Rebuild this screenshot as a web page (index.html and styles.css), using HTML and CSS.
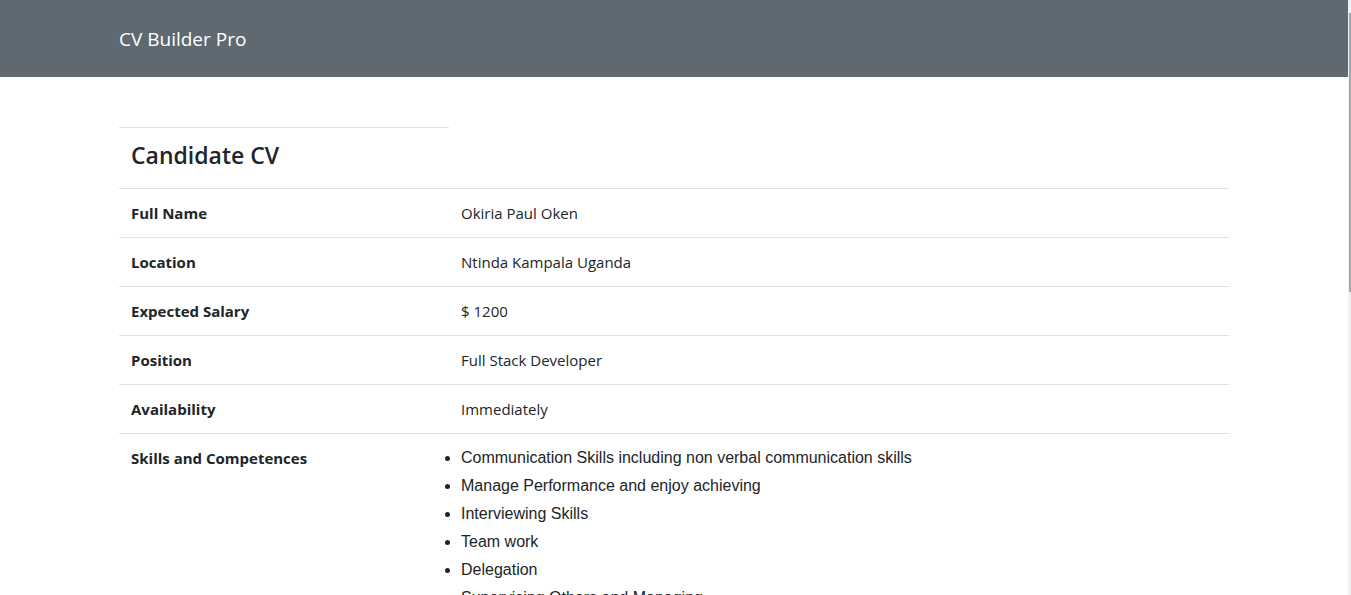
FILE: index.html
```html
<!DOCTYPE html>
<html lang="en">
<head>
<meta charset="utf-8">
<title>CV Builder Pro</title>
<link rel="stylesheet" href="styles.css">
</head>
<body>
<div class="page">
  <nav class="navbar">
    <div class="container">
      <a class="brand" href="#">CV Builder Pro</a>
    </div>
  </nav>
  <main class="container main">
    <table class="cv-table">
      <thead>
        <tr><th class="title-cell"><h4>Candidate CV</h4></th><th class="empty-head"></th></tr>
      </thead>
      <tbody>
        <tr><th>Full Name</th><td>Okiria Paul Oken</td></tr>
        <tr><th>Location</th><td>Ntinda Kampala Uganda</td></tr>
        <tr><th>Expected Salary</th><td>$ 1200</td></tr>
        <tr><th>Position</th><td>Full Stack Developer</td></tr>
        <tr><th>Availability</th><td>Immediately</td></tr>
        <tr><th>Skills and Competences</th><td>
          <ul class="skills">
            <li>Communication Skills including non verbal communication skills</li>
            <li>Manage Performance and enjoy achieving</li>
            <li>Interviewing Skills</li>
            <li>Team work</li>
            <li>Delegation</li>
            <li>Supervising Others and Managing</li>
            <li>Problem Solving</li>
            <li>Time Management</li>
          </ul>
        </td></tr>
        <tr><th>Education</th><td>Bachelor of Science in Computer Science</td></tr>
        <tr><th>Languages</th><td>English, Luganda</td></tr>
        <tr><th>Experience</th><td>5 Years</td></tr>
        <tr><th>Email</th><td>okiria.paul@example.com</td></tr>
        <tr><th>Phone</th><td>+256 700 000 000</td></tr>
        <tr><th>References</th><td>Available on request</td></tr>
      </tbody>
    </table>
  </main>
</div>
<div class="scrollbar"><div class="scrollbar-thumb"></div></div>
</body>
</html>
```
FILE: styles.css
```css
html { overflow: hidden; }
body {
  margin: 0;
  font-family: "Open Sans", "Noto Sans", sans-serif;
  font-size: 16px;
  line-height: 1.5;
  color: #212529;
  background: #fff;
}
.page { width: calc(100% - 3px); }
.container {
  max-width: 1140px;
  margin: 0 auto;
  padding: 0 15px;
  box-sizing: border-box;
}
.navbar {
  background: #5f6972;
  height: 77px;
  display: flex;
  align-items: center;
}
.navbar .container { width: 100%; }
.brand {
  display: block;
  color: #fff;
  text-decoration: none;
  font-size: 19px;
  line-height: 26px;
}
.main { padding-top: 50px; padding-bottom: 60px; }
.cv-table {
  width: 100%;
  border-collapse: collapse;
}
.cv-table th, .cv-table td {
  padding: 12px;
  text-align: left;
  vertical-align: top;
  border-top: 1px solid #dee2e6;
  font-size: 15px;
  line-height: 24px;
}
.cv-table th { width: 306px; font-weight: 700; }
.cv-table td { font-weight: 400; }
.cv-table thead th.empty-head { border-top: none; width: auto; }
.title-cell h4 {
  margin: 0;
  font-size: 23px;
  font-weight: 600;
  line-height: 28.8px;
  padding-top: 1px;
  padding-bottom: 6px;
}
.skills {
  margin: 0;
  padding: 0;
  font-family: "Liberation Sans", Arial, sans-serif;
  font-size: 16px;
}
.skills li { margin-bottom: 4px; }
.scrollbar {
  position: fixed;
  top: 0;
  right: 0;
  bottom: 0;
  width: 3px;
  background: #f1f1f1;
}
.scrollbar-thumb {
  margin-top: 13px;
  margin-left: 1px;
  width: 2px;
  height: 279px;
  background: #a8a8a8;
}
```
